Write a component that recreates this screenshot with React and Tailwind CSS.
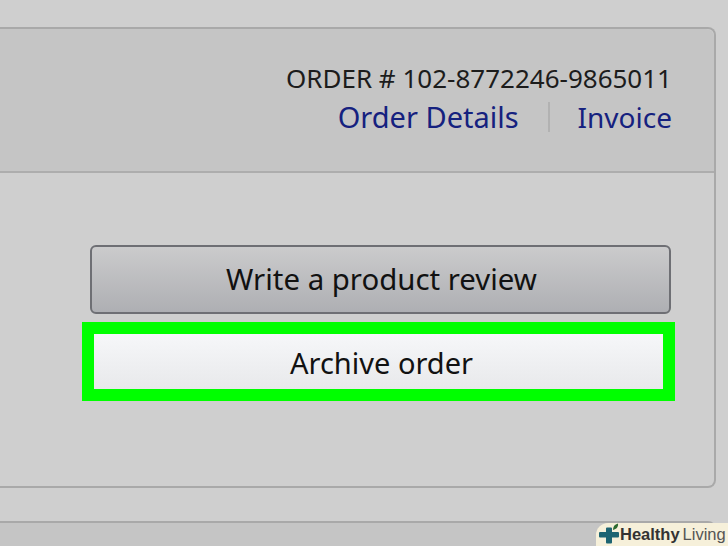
export default function App() {
  return (
    <div className="relative w-[728px] h-[546px] overflow-hidden bg-[#cfcfcf] pt-[27px] font-['Noto_Sans',sans-serif]">
      {/* Order card, runs off the left edge */}
      <div className="w-[716px] h-[461px] rounded-r-lg border-2 border-l-0 border-[#a9a9a9] flex flex-col">
        <div className="h-[144px] shrink-0 rounded-tr-lg bg-[#c5c5c5] border-b-2 border-[#adadad] pr-[42px] pt-[31px] flex flex-col items-end">
          <div className="text-[26px] leading-[36px] text-[#1c1c1c]">ORDER # 102-8772246-9865011</div>
          <div className="flex items-center mt-[3px] leading-[36px] text-[#15217f]">
            <span className="text-[29px]">Order Details</span>
            <span className="w-[2px] h-[30px] bg-[#b2b2b2] ml-[29px] mr-[28px]" />
            <span className="text-[28px]">Invoice</span>
          </div>
        </div>
        <div className="flex flex-col items-end pr-[43px] pt-[72px]">
          <button className="w-[581px] h-[69px] pb-[1px] pl-[2px] rounded-[6px] border-2 border-[#6e6f74] bg-gradient-to-b from-[#cbcbcc] to-[#aeafb3] text-[29.4px] text-[#111]">
            Write a product review
          </button>
          <button className="w-[593px] h-[79px] mt-[8px] -mr-[4px] pl-[6px] pt-[2px] border-[12px] border-[#00ff00] bg-gradient-to-b from-[#f6f7f9] to-[#e8e9eb] text-[29px] text-[#111]">
            Archive order
          </button>
        </div>
      </div>
      {/* Next card peeking in at the bottom */}
      <div className="w-[716px] h-[40px] mt-[33px] rounded-tr-lg border-t-2 border-r-2 border-[#a9a9a9] bg-[#c5c5c5]" />
      {/* Watermark */}
      <div className="absolute right-0 bottom-0 w-[132px] h-[23px] rounded-tl-[12px] bg-[#f6f0da] flex items-center pl-[3px] text-[16.5px] leading-none font-['Liberation_Sans',sans-serif]">
        <svg width="21" height="23" viewBox="0 0 21 23" className="shrink-0">
          <path d="M7 5.500a1 1 0 0 1 1-1h4a1 1 0 0 1 1 1V9h6a1 1 0 0 1 1 1v3.500a1 1 0 0 1-1 1h-6v5a1 1 0 0 1-1 1H8a1 1 0 0 1-1-1v-5H1a1 1 0 0 1-1-1V10a1 1 0 0 1 1-1h6z" fill="#1d6472" />
          <path d="M14 7c0-3.500 1.500-5.500 5-6.500.5 3.500-1.500 5.500-5 6.500z" fill="#2d6a2f" />
        </svg>
        <span className="font-bold text-[#333]">Healthy</span>
        <span className="ml-[3px] text-[#555]">Living</span>
      </div>
    </div>
  );
}
